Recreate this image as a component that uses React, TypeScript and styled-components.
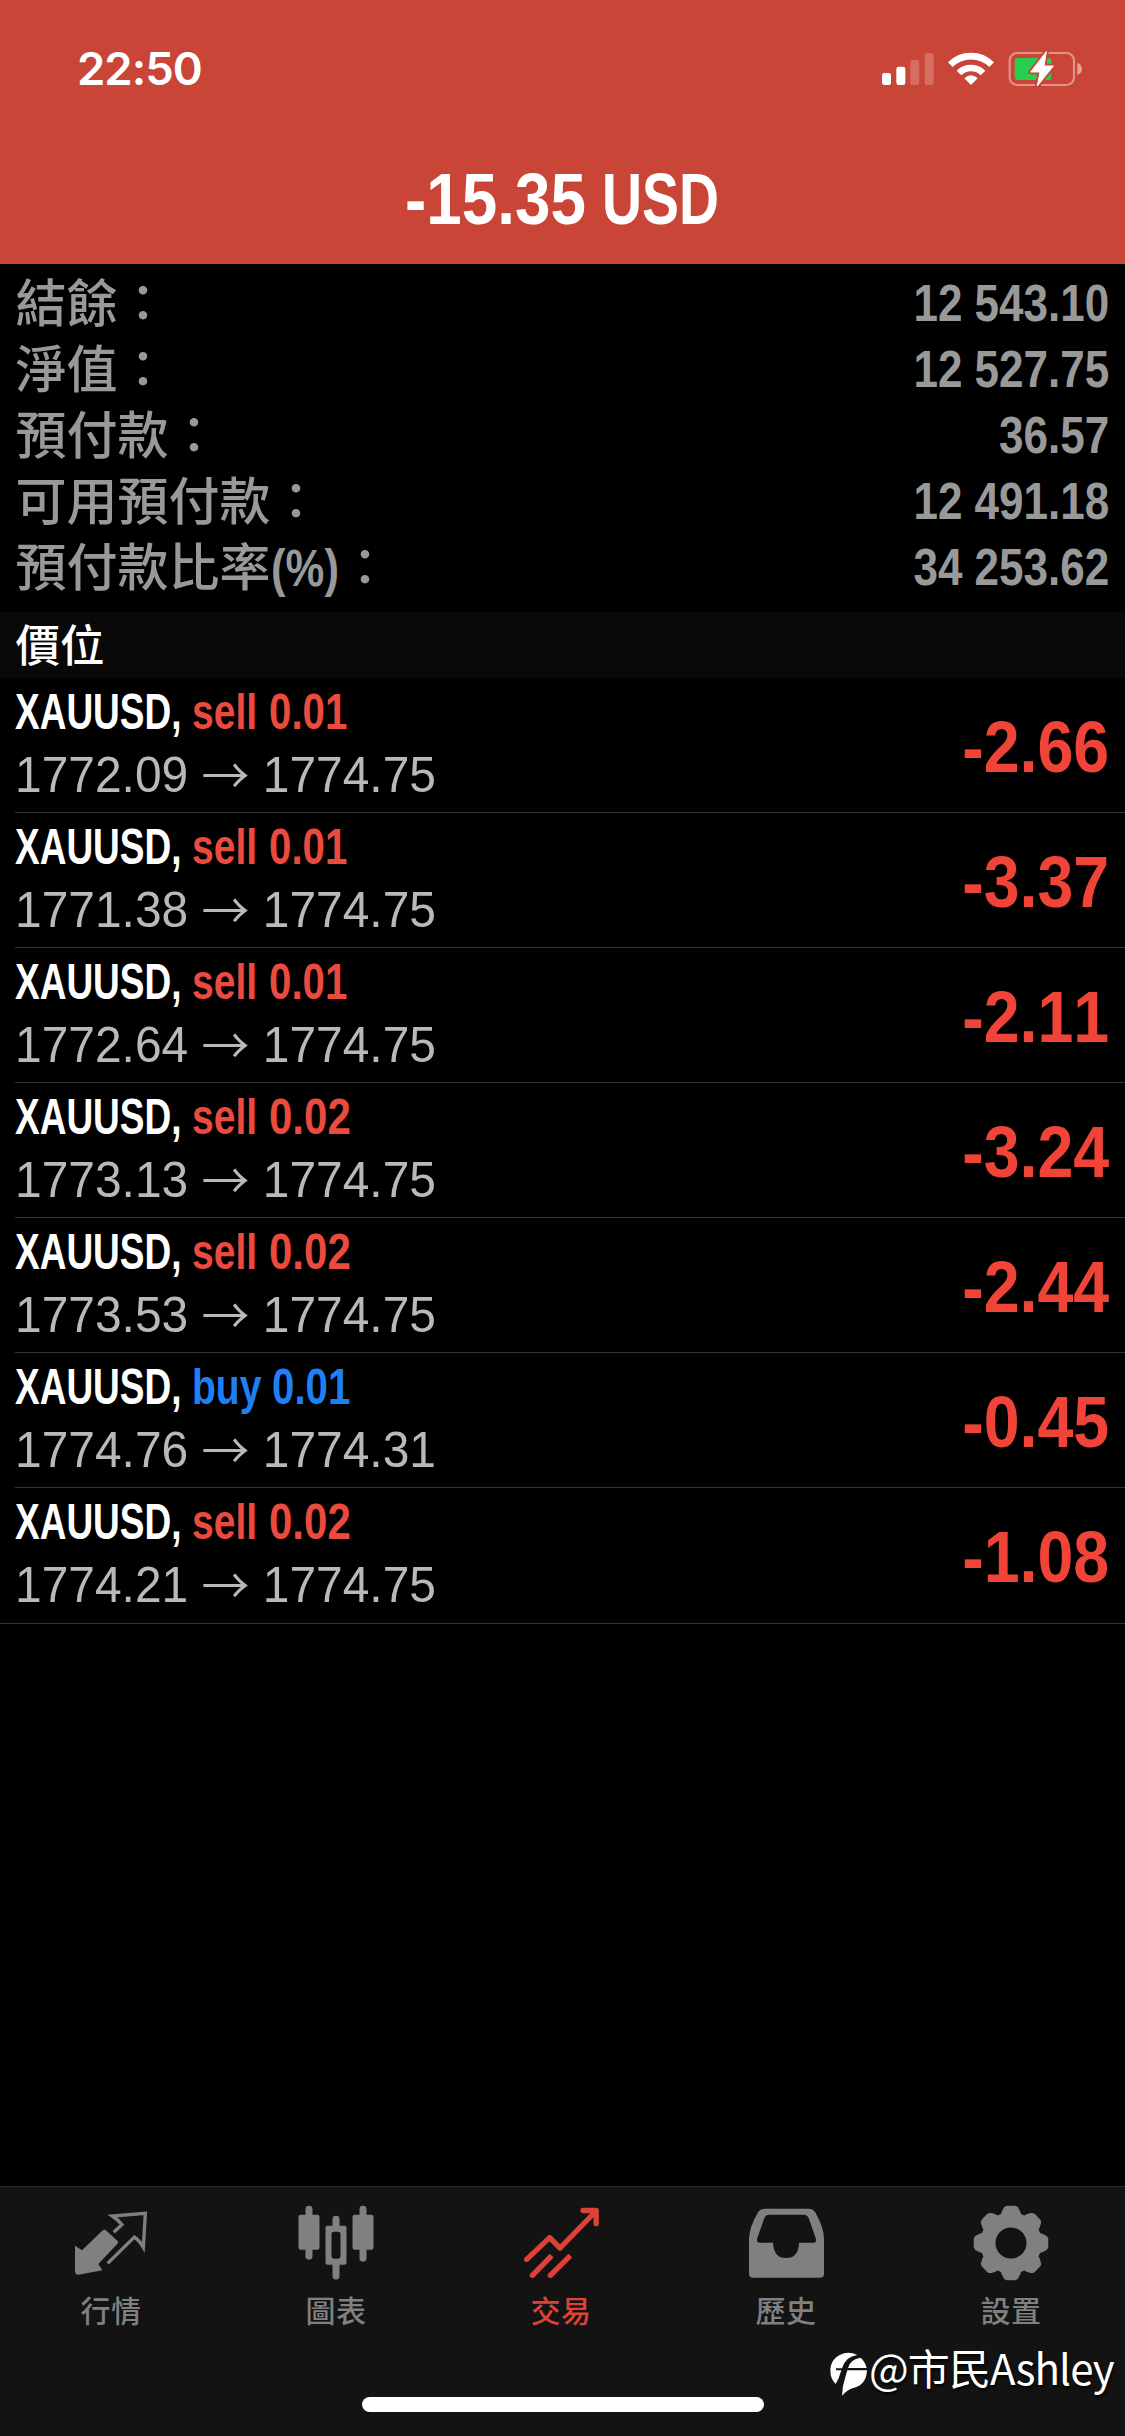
import React from "react";
import styled, { createGlobalStyle } from "styled-components";

const latin = '"Liberation Sans", Arial, "Noto Sans CJK TC", sans-serif';
const cjk = '"Noto Sans CJK TC", "Noto Sans CJK SC", sans-serif';

const color = {
  header: "#c94537",
  loss: "#f04438",
  sell: "#eb4b3e",
  buy: "#1f80f6",
  muted: "#999999",
  price: "#b9b9b9",
  line: "#333333",
  tab: "#808080",
  active: "#de4136",
};

const GlobalStyle = createGlobalStyle`
  * { box-sizing: border-box; }
  body { margin: 0; background: #000; }
`;

const Screen = styled.div`
  position: relative;
  display: flex;
  flex-direction: column;
  width: 1125px;
  height: 2436px;
  overflow: hidden;
  background: #000;
  color: #fff;
  font-family: ${latin};
`;

const Header = styled.header`
  height: 264px;
  background: ${color.header};
`;

const StatusBar = styled.div`
  display: flex;
  align-items: center;
  justify-content: space-between;
  height: 138px;
  padding: 0 43px 0 77px;
`;

const Clock = styled.span`
  font: 600 45.5px/60px Inter, sans-serif;
  letter-spacing: -1px;
`;

const StatusIcons = styled.div`
  display: flex;
  gap: 14px;
  svg { display: block; height: 37.33px; }
`;

const Title = styled.h1`
  display: flex;
  justify-content: center;
  margin: 0;
  padding-right: 1px;
  line-height: 122px;
`;

/* A run of condensed bold type: the slot takes the narrow width, the glyphs are squeezed into it. */
const Slot = styled.span<{ $w?: number; $end?: boolean }>`
  display: inline-flex;
  justify-content: ${(p) => (p.$end ? "flex-end" : "flex-start")};
  width: ${(p) => (p.$w ? `${p.$w}px` : "auto")};
  white-space: pre;
`;

const Glyphs = styled.span<{ $size: number; $scale: number; $end?: boolean; $color?: string }>`
  flex: none;
  font-family: ${latin};
  font-size: ${(p) => p.$size}px;
  font-weight: 700;
  font-kerning: none;
  color: ${(p) => p.$color ?? "inherit"};
  transform: scaleX(${(p) => p.$scale});
  transform-origin: ${(p) => (p.$end ? "right" : "left")} center;
`;

interface CondensedProps {
  size: number;
  scale: number;
  width?: number;
  end?: boolean;
  color?: string;
  children: React.ReactNode;
}

const Condensed = ({ size, scale, width, end, color: tint, children }: CondensedProps) => (
  <Slot $w={width} $end={end}>
    <Glyphs $size={size} $scale={scale} $end={end} $color={tint}>{children}</Glyphs>
  </Slot>
);

const Summary = styled.section`
  padding: 6px 15.5px 12px;
  color: ${color.muted};
`;

const SummaryRow = styled.div`
  display: flex;
  justify-content: space-between;
  height: 66px;
  line-height: 66px;
`;

const SummaryLabel = styled.span`
  display: flex;
  align-items: baseline;
  height: 66px;
  font: 500 51px/69px ${latin};
`;

const SectionTitle = styled.h2`
  height: 66px;
  margin: 0;
  padding-left: 15.5px;
  background: #080808;
  font: 500 44.5px/61px ${cjk};
`;

const Positions = styled.ul`
  flex: 1;
  margin: 0;
  padding: 0;
  list-style: none;
`;

const Position = styled.li`
  display: flex;
  justify-content: space-between;
  height: 135px;
  margin-left: 15px;
  padding-right: 16px;
  border-bottom: 1px solid ${color.line};
  &:last-child {
    height: 136px;
    margin-left: 0;
    padding-left: 15px;
  }
`;

const Details = styled.div`
  padding-top: 4px;
`;

const Deal = styled.div`
  display: flex;
  height: 60px;
  line-height: 61px;
`;

const Prices = styled.div`
  height: 66px;
  color: ${color.price};
  font-size: 49.5px;
  line-height: 66px;
  white-space: nowrap;
  transform: scaleX(0.968);
  transform-origin: left center;
`;

const Arrow = styled.span`
  position: relative;
  top: 1.5px;
  font-family: ${cjk};
  font-weight: 350;
  line-height: 0;
`;

const Profit = styled.div`
  line-height: 138px;
`;

const TabBar = styled.nav`
  height: 250px;
  border-top: 1px solid #2c2c2c;
  background: #131313;
`;

const Tabs = styled.div`
  display: grid;
  grid-template-columns: repeat(5, 225px);
  height: 210px;
  margin-left: -2px;
`;

const Tab = styled.div<{ $active?: boolean }>`
  display: flex;
  flex-direction: column;
  align-items: center;
  padding-top: 16px;
  color: ${(p) => (p.$active ? color.active : color.tab)};
  svg { display: block; width: 80px; height: 80px; }
`;

const TabLabel = styled.span`
  margin-top: 4px;
  padding-left: 1px;
  font: 500 30px/44px ${cjk};
  letter-spacing: 0.5px;
`;

const HomeIndicator = styled.div`
  width: 402px;
  height: 15px;
  margin: 0 auto;
  border-radius: 8px;
  background: #fff;
`;

const Watermark = styled.div`
  position: absolute;
  top: 2341px;
  left: 829px;
  display: flex;
  align-items: flex-start;
  font: 400 42px/51px "Noto Sans CJK SC", sans-serif;
  letter-spacing: -0.9px;
  white-space: nowrap;
  text-shadow: 1px 2px 3px #000;
  svg { width: 40px; height: 46px; margin-top: 10px; }
`;

const SignalIcon = () => (
  <svg width="52" viewBox="35 30 156 112" fill="#fff">
    <rect x="35" y="99" width="27" height="36" rx="7" />
    <rect x="78" y="80" width="27" height="55" rx="7" />
    <rect x="120" y="60" width="27" height="75" rx="7" opacity=".22" />
    <rect x="163" y="39" width="27" height="96" rx="7" opacity=".22" />
  </svg>
);

const WifiIcon = () => (
  <svg width="46.3" viewBox="233 30 139 112" fill="none" stroke="#fff" strokeWidth="20">
    <path d="M240 74 A88 88 0 0 1 364 74" />
    <path d="M266 99 A51 51 0 0 1 338 99" />
    <path d="M302 135 L282 115 Q302 97 322 115 Z" fill="#fff" stroke="none" />
  </svg>
);

const BatteryIcon = () => (
  <svg width="74" viewBox="415 30 222 112">
    <rect x="420" y="39" width="193" height="96" rx="22" fill="none" stroke="#fff" strokeOpacity=".42" strokeWidth="6.5" />
    <path d="M623 68 Q637 74 637 87 Q637 99 623 105 Z" fill="#fff" fillOpacity=".5" />
    <rect x="435" y="54" width="110" height="66" rx="10" fill="#28cf4f" />
    <path d="M530 35 L483 96 L511 96 L503 138 L551 78 L523 78 Z" fill="#fff" stroke={color.header} strokeWidth="14" strokeLinejoin="round" />
    <path d="M530 35 L483 96 L511 96 L503 138 L551 78 L523 78 Z" fill="#fff" stroke="#fff" strokeWidth="3" strokeLinejoin="round" />
  </svg>
);

const QuotesIcon = () => (
  <svg viewBox="213 100 240 240">
    <path
      fill="currentColor"
      d="M225 228 L246 242 L306 184 Q313 177 320 184 L352 213 Q357 218 351 224 L295 283 L307 302 L236 315 Q225 316 225 305 Z"
    />
    <path
      d="M341 188 L366 165 Q354 150 337 139 L436 131 L430 233 Q417 211 403 202 L323 281"
      fill="none"
      stroke="currentColor"
      strokeWidth="10"
    />
  </svg>
);

const ChartIcon = () => (
  <svg viewBox="889.5 100 240 240" fill="currentColor">
    <rect x="897" y="135" width="63" height="105" rx="6" />
    <rect x="918" y="108" width="21" height="162" rx="10" />
    <rect x="1059" y="135" width="63" height="105" rx="6" />
    <rect x="1080" y="108" width="21" height="168" rx="10" />
    <path
      fillRule="evenodd"
      d="M984 168 H999 V148 Q999 138 1009.500 138 Q1020 138 1020 148 V168 H1035 Q1041 168 1041 174 V279 Q1041 285 1035 285 H1020 V320 Q1020 330 1009.500 330 Q999 330 999 320 V285 H984 Q978 285 978 279 V174 Q978 168 984 168 Z M1003 186 Q996 186 996 193 V260 Q996 267 1003 267 H1016 Q1023 267 1023 260 V193 Q1023 186 1016 186 Z"
    />
  </svg>
);

const TradeIcon = () => (
  <svg viewBox="303 100 240 240" fill="none" stroke="currentColor" strokeWidth="16">
    <path d="M320 269 L389 204 L420 235 L528 124" strokeLinejoin="round" />
    <path d="M489 122.500 H528.500 V162" strokeLinecap="round" strokeLinejoin="round" />
    <path d="M337 317 L395 258" />
    <path d="M391 317 L451 258" />
    <g fill="currentColor" stroke="none">
      <circle cx="320" cy="269" r="8" />
      <circle cx="337" cy="317" r="8" />
      <circle cx="391" cy="317" r="8" />
    </g>
  </svg>
);

const HistoryIcon = () => (
  <svg viewBox="978 100 240 240">
    <path
      fill="currentColor"
      fillRule="evenodd"
      d="M1036 117 H1166 Q1180 117 1187 130 Q1212 175 1212 208 V312 Q1212 324 1200 324 H999 Q987 324 987 312 V208 Q988 172 1013 130 Q1020 117 1036 117 Z M1048 135 Q1037 135 1033 145 L1012 205 Q1009 219 1019 219 H1059 Q1061 265 1098 265 Q1136 265 1137 219 H1180 Q1191 219 1187 205 L1166 145 Q1162 135 1150 135 Z"
    />
  </svg>
);

const gearOutline = Array.from({ length: 8 }, (_, i) => {
  const at = (r: number, deg: number) => {
    const a = ((i * 45 + deg - 90) * Math.PI) / 180;
    return `${(120 + r * Math.cos(a)).toFixed(1)} ${(120 + r * Math.sin(a)).toFixed(1)}`;
  };
  return `${i ? "L" : "M"}${at(92, -19)} L${at(98, -16.5)} L${at(107, -12)} Q${at(112, -10)} ${at(112.5, -6)} L${at(112.5, 6)} Q${at(112, 10)} ${at(107, 12)} L${at(98, 16.5)} L${at(92, 19)}`;
}).join(" ");

const SettingsIcon = () => (
  <svg viewBox="0 0 240 240">
    <path
      fill="currentColor"
      fillRule="evenodd"
      d={`${gearOutline} Z M73.500 120 a46.500 46.500 0 1 0 93 0 a46.500 46.500 0 1 0 -93 0 Z`}
    />
  </svg>
);

const WatermarkLogo = () => (
  <svg viewBox="27 33 120 138" fill="#fff">
    <path d="M112 45 Q90 34 68 41 Q31 54 31 92 Q31 116 47 132 Q58 114 64 91 H48 V85 H66 Q76 50 112 45 Z" />
    <path d="M122 53 Q136 66 140 84 H84 Q90 58 122 53 Z" />
    <path d="M82 91 H141 Q139 135 100 144 Q82 149 66 167 Q66 140 76 112 Z" />
  </svg>
);

const summary = [
  { label: "結餘", value: "12 543.10" },
  { label: "淨值", value: "12 527.75" },
  { label: "預付款", value: "36.57" },
  { label: "可用預付款", value: "12 491.18" },
  { label: "預付款比率", unit: "(%)", value: "34 253.62" },
];

const positions = [
  { side: "sell", lots: "0.01", open: "1772.09", now: "1774.75", profit: "-2.66" },
  { side: "sell", lots: "0.01", open: "1771.38", now: "1774.75", profit: "-3.37" },
  { side: "sell", lots: "0.01", open: "1772.64", now: "1774.75", profit: "-2.11" },
  { side: "sell", lots: "0.02", open: "1773.13", now: "1774.75", profit: "-3.24" },
  { side: "sell", lots: "0.02", open: "1773.53", now: "1774.75", profit: "-2.44" },
  { side: "buy", lots: "0.01", open: "1774.76", now: "1774.31", profit: "-0.45" },
  { side: "sell", lots: "0.02", open: "1774.21", now: "1774.75", profit: "-1.08" },
];

const tabs = [
  { label: "行情", Icon: QuotesIcon },
  { label: "圖表", Icon: ChartIcon },
  { label: "交易", Icon: TradeIcon, active: true },
  { label: "歷史", Icon: HistoryIcon },
  { label: "設置", Icon: SettingsIcon },
];

export default function App() {
  return (
    <>
      <GlobalStyle />
      <Screen>
        <Header>
          <StatusBar>
            <Clock>22:50</Clock>
            <StatusIcons>
              <SignalIcon />
              <WifiIcon />
              <BatteryIcon />
            </StatusIcons>
          </StatusBar>
          <Title>
            <Condensed size={72.5} scale={0.88} width={197}>-15.35</Condensed>
            <Condensed size={72.5} scale={0.765} width={118}>USD</Condensed>
          </Title>
        </Header>

        <Summary>
          {summary.map((row) => (
            <SummaryRow key={row.label}>
              <SummaryLabel>
                {row.label}
                {row.unit && <Condensed size={52} scale={0.84} width={69}>{row.unit}</Condensed>}
                ：
              </SummaryLabel>
              <Condensed size={52} scale={0.847} end>{row.value}</Condensed>
            </SummaryRow>
          ))}
        </Summary>

        <SectionTitle>價位</SectionTitle>
        <Positions>
          {positions.map((p) => {
            const tint = p.side === "buy" ? color.buy : color.sell;
            return (
              <Position key={p.open}>
                <Details>
                  <Deal>
                    <Condensed size={50} scale={0.74} width={177}>XAUUSD,</Condensed>
                    <Condensed size={50} scale={0.78} width={p.side === "buy" ? 80 : 77} color={tint}>{p.side}</Condensed>
                    <Condensed size={50} scale={p.lots.endsWith("1") ? 0.805 : 0.84} width={84} color={tint}>{p.lots}</Condensed>
                  </Deal>
                  <Prices>
                    {p.open} <Arrow>→</Arrow> {p.now}
                  </Prices>
                </Details>
                <Profit>
                  <Condensed size={72.5} scale={0.89} end color={color.loss}>{p.profit}</Condensed>
                </Profit>
              </Position>
            );
          })}
        </Positions>

        <TabBar>
          <Tabs>
            {tabs.map(({ label, Icon, active }) => (
              <Tab key={label} $active={active}>
                <Icon />
                <TabLabel>{label}</TabLabel>
              </Tab>
            ))}
          </Tabs>
          <HomeIndicator />
        </TabBar>

        <Watermark>
          <WatermarkLogo />
          @市民Ashley
        </Watermark>
      </Screen>
    </>
  );
}
